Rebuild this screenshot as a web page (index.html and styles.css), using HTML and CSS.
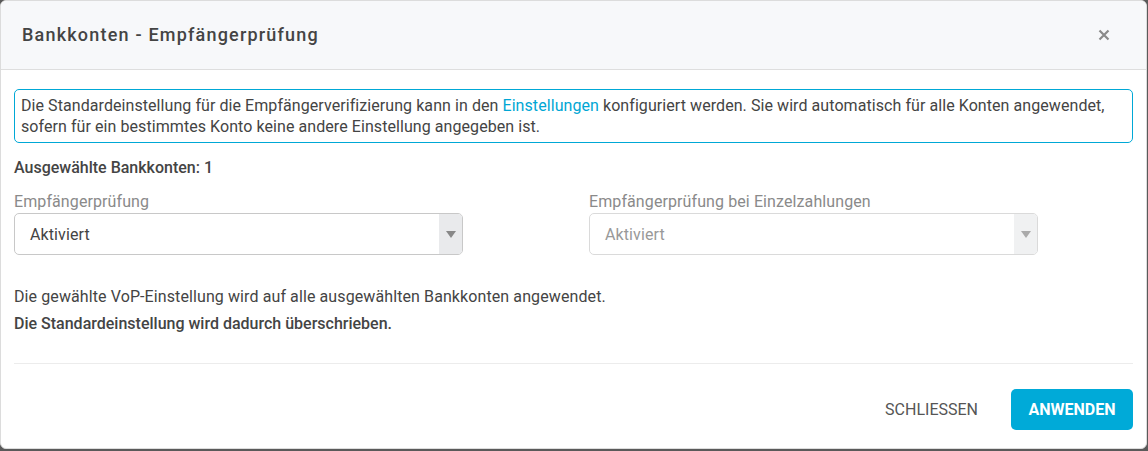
FILE: index.html
```html
<!DOCTYPE html>
<html lang="de">
<head>
<meta charset="utf-8">
<title>Bankkonten - Empfängerprüfung</title>
<link rel="stylesheet" href="styles.css">
</head>
<body>
<div class="modal">
  <div class="modal-header">
    <h1 class="modal-title">Bankkonten - Empfängerprüfung</h1>
    <button class="close" aria-label="Schließen">
      <svg width="12" height="12" viewBox="0 0 12 12"><path d="M1.5 1.5 L10.5 10.5 M10.5 1.5 L1.5 10.5" stroke="#8a8a8a" stroke-width="2.2" stroke-linecap="butt"/></svg>
    </button>
  </div>
  <div class="modal-body">
    <div class="info">Die Standardeinstellung für die Empfängerverifizierung kann in den <a class="link">Einstellungen</a> konfiguriert werden. Sie wird automatisch für alle Konten angewendet, sofern für ein bestimmtes Konto keine andere Einstellung angegeben ist.</div>
    <div class="selected">Ausgewählte Bankkonten: 1</div>
    <div class="fields">
      <div class="field">
        <label class="label">Empfängerprüfung</label>
        <div class="select">
          <span class="value">Aktiviert</span>
          <span class="arrow"><svg width="10" height="7" viewBox="0 0 10 7"><path d="M0 0 H10 L5 7 Z" fill="#888"/></svg></span>
        </div>
      </div>
      <div class="field">
        <label class="label">Empfängerprüfung bei Einzelzahlungen</label>
        <div class="select disabled">
          <span class="value">Aktiviert</span>
          <span class="arrow"><svg width="10" height="7" viewBox="0 0 10 7"><path d="M0 0 H10 L5 7 Z" fill="#aaa"/></svg></span>
        </div>
      </div>
    </div>
    <p class="note first">Die gewählte VoP-Einstellung wird auf alle ausgewählten Bankkonten angewendet.</p>
    <p class="note strong">Die Standardeinstellung wird dadurch überschrieben.</p>
  </div>
  <div class="modal-footer">
    <button class="btn btn-flat">SCHLIESSEN</button>
    <button class="btn btn-primary">ANWENDEN</button>
  </div>
</div>
</body>
</html>
```
FILE: styles.css
```css
html, body {
  margin: 0;
  padding: 0;
  background: #5a5a5a;
}
body {
  font-family: Roboto, "Liberation Sans", Arial, sans-serif;
  color: #444;
  width: 1148px;
  height: 451px;
  overflow: hidden;
}
.modal {
  width: 1147px;
  height: 449px;
  background: #fff;
  border: 1px solid #dcdcdc;
  border-radius: 6px;
  box-sizing: border-box;
  overflow: hidden;
  display: flex;
  flex-direction: column;
}
.modal-header {
  height: 69px;
  flex: none;
  box-sizing: border-box;
  background: #f7f8fa;
  border-bottom: 1px solid #dedede;
  display: flex;
  align-items: center;
  justify-content: space-between;
  padding: 0 36px 0 21px;
}
.modal-title {
  margin: 0;
  font-size: 18px;
  font-weight: 500;
  letter-spacing: 1.2px;
  color: #444;
  padding-bottom: 1px;
}
.close {
  border: 0;
  background: transparent;
  padding: 0;
  display: flex;
  cursor: pointer;
}
.modal-body {
  padding: 19px 13px 0 13px;
  flex: 1;
  letter-spacing: 0.1px;
}
.info {
  border: 1px solid #00a8d6;
  border-radius: 5px;
  padding: 5px 6px 5px 6px;
  font-size: 16px;
  line-height: 21px;
  color: #444;
  letter-spacing: 0.07px;
}
.link {
  color: #00a6d4;
  text-decoration: none;
}
.selected {
  margin-top: 15px;
  font-size: 16px;
  font-weight: 500;
  line-height: 20px;
  color: #444;
  letter-spacing: 0;
}
.fields {
  display: grid;
  grid-template-columns: 449px 449px;
  column-gap: 126px;
  margin-top: 14px;
}
.field {
  display: flex;
  flex-direction: column;
}
.label {
  font-size: 16px;
  line-height: 20px;
  color: #8a8a8a;
  margin-bottom: 1px;
}
.select {
  height: 42px;
  box-sizing: border-box;
  border: 1px solid #c8c8c8;
  border-radius: 5px;
  display: flex;
  align-items: stretch;
  overflow: hidden;
}
.select .value {
  flex: 1;
  display: flex;
  align-items: center;
  padding-left: 15px;
  font-size: 16px;
  color: #444;
}
.select .arrow {
  width: 23px;
  background: #e9eaec;
  display: flex;
  align-items: center;
  justify-content: center;
}
.select.disabled {
  border-color: #dadada;
}
.select.disabled .value {
  color: #999;
}
.select.disabled .arrow {
  background: #f0f1f2;
}
.note {
  margin: 0;
  font-size: 16px;
  line-height: 27px;
  color: #444;
}
.note.first {
  margin-top: 28px;
}
.note.strong {
  font-weight: 500;
  letter-spacing: 0;
}
.modal-footer {
  flex: none;
  margin: 0 13px;
  border-top: 1px solid #ececec;
  height: 85px;
  box-sizing: border-box;
  display: flex;
  align-items: flex-start;
  justify-content: flex-end;
  padding-top: 25px;
  gap: 19px;
}
.btn {
  font-family: Roboto, "Liberation Sans", Arial, sans-serif;
  font-size: 16px;
  border: 0;
  border-radius: 5px;
  height: 41px;
  cursor: pointer;
}
.btn-flat {
  background: transparent;
  color: #555;
  padding: 0 14px;
}
.btn-primary {
  background: #00aad8;
  color: #fff;
  font-weight: 700;
  width: 122px;
  padding: 0;
}
```
